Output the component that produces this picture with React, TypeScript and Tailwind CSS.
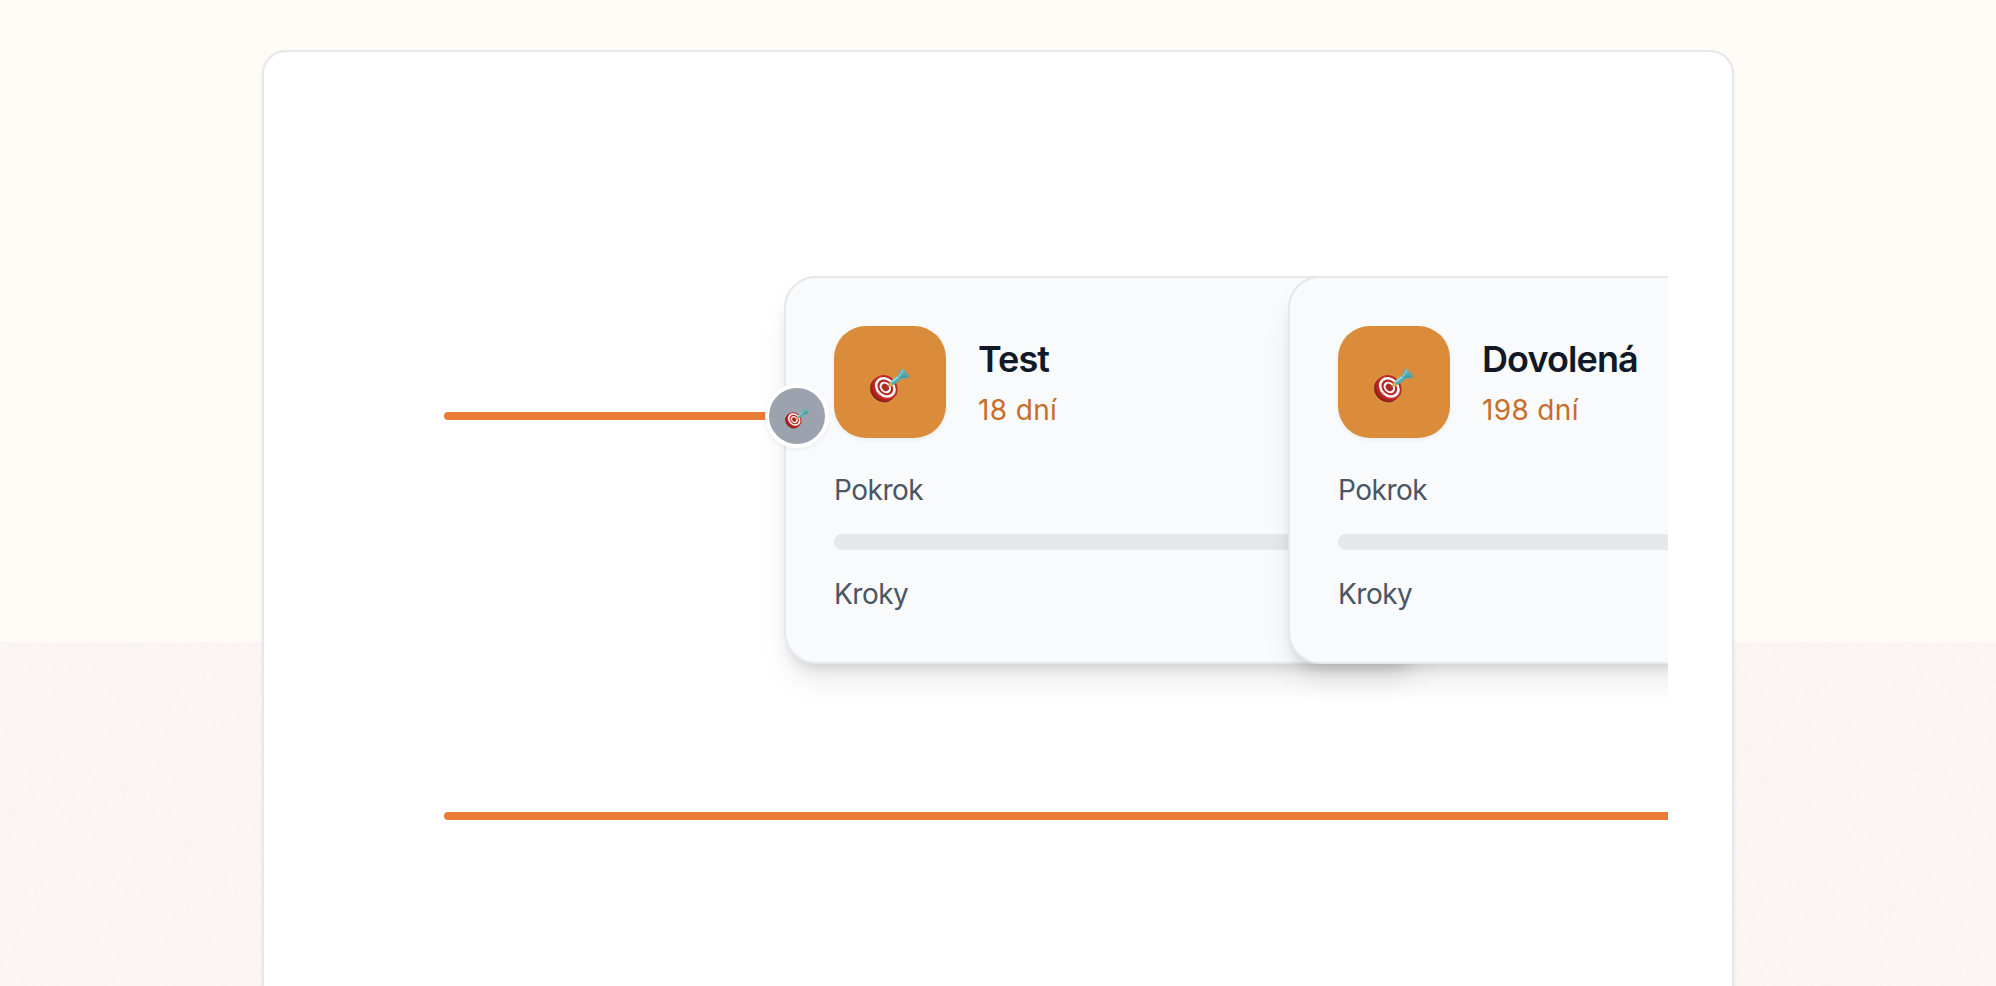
type Goal = { title: string; days: string; offset: string };

const goals: Goal[] = [
  { title: "Test", days: "18 dní", offset: "ml-[456px]" },
  { title: "Dovolená", days: "198 dní", offset: "-ml-[136px]" },
];

function TargetIcon({ className }: { className: string }) {
  return (
    <svg viewBox="0 0 120 103" className={`overflow-visible ${className}`} aria-hidden="true">
      <ellipse cx="38" cy="65" rx="40" ry="35" transform="rotate(45 38 65)" fill="#7f1f1b" />
      <ellipse cx="41" cy="62" rx="40" ry="35" transform="rotate(45 41 62)" fill="#a82320" />
      <g transform="rotate(45 46 58)">
        <ellipse cx="46" cy="58" rx="40" ry="34" fill="#bf2c27" />
        <ellipse cx="46" cy="58" rx="34" ry="28" fill="#fafafa" />
        <ellipse cx="46" cy="58" rx="26" ry="21" fill="#b92521" />
        <ellipse cx="46" cy="58" rx="19" ry="15.500" fill="#fafafa" />
        <ellipse cx="46" cy="58" rx="12" ry="9.500" fill="#b12420" />
      </g>
      <path d="M48 58L63 48" stroke="#8a5a20" strokeWidth="3" />
      <path d="M56 48l7-8 8 11-9 4z" fill="#e3b52c" />
      <path d="M62 42Q64 35 86 22L94 33Q76 48 70 51Q63 50 62 42z" fill="#4fa9b3" />
      <path d="M63 41Q66 34 86 22L90 27Q74 38 65 45z" fill="#8adbe0" />
      <path d="M84 25L88 10L100 0Q104 4 105 12L97 26L91 31z" fill="#5fb3bc" />
      <path d="M88 28L102 15L109 10Q109 16 112 18Q115 21 120 24L108 31L92 33z" fill="#55a6b0" />
      <path d="M89 29L114 24" stroke="#388792" strokeWidth="2" />
      <path d="M88 24L99 5" stroke="#8fdbe0" strokeWidth="2.500" />
    </svg>
  );
}

function GoalCard({ goal }: { goal: Goal }) {
  return (
    <article
      className={`${goal.offset} h-[388px] w-[640px] shrink-0 rounded-[32px] border-2 border-[#e5e7eb] bg-[#f9fafb] p-12 shadow-[0_20px_30px_-6px_rgba(0,0,0,0.1),0_8px_12px_-4px_rgba(0,0,0,0.1)]`}
    >
      <header className="mb-8 flex items-center gap-8">
        <div className="flex size-28 items-center justify-center rounded-[32px] bg-[#da8c3a] pt-1.5 shadow-[0_2px_4px_rgba(0,0,0,0.05)]">
          <TargetIcon className="h-[34.500px] w-10" />
        </div>
        <div>
          <h3 className="mb-1.5 text-[36px] leading-[50px] font-semibold tracking-[-0.025em] text-[#111827]">
            {goal.title}
          </h3>
          <p className="text-[28px] leading-10 tracking-[0.35px] text-[#c66e2a]">{goal.days}</p>
        </div>
      </header>
      <p className="text-[28px] leading-10 tracking-[-0.5px] text-[#4b5563]">Pokrok</p>
      <div className="my-6 h-4 rounded-full bg-[#e5e7eb]" />
      <p className="text-[28px] leading-10 tracking-[-0.5px] text-[#4b5563]">Kroky</p>
    </article>
  );
}

export default function App() {
  return (
    <main className="grid h-[986px] grid-cols-1 overflow-hidden bg-[#fffbf6] font-['Inter','Liberation_Sans',sans-serif]">
      <svg className="col-start-1 row-start-1 mt-[642px] h-[344px] w-full bg-[#fcf7f4]" aria-hidden="true">
        <filter id="grain" x="0" y="0" width="100%" height="100%">
          <feTurbulence type="fractalNoise" baseFrequency="0.3" numOctaves="3" stitchTiles="stitch" />
          <feColorMatrix type="saturate" values="0.4" />
        </filter>
        <rect width="100%" height="100%" filter="url(#grain)" opacity="0.06" />
      </svg>
      <section className="col-start-1 row-start-1 mx-auto mt-[50px] h-[1100px] w-[1472px] rounded-3xl border-2 border-[#e5e7eb] bg-white p-16 shadow-[0_2px_4px_rgba(0,0,0,0.05)]">
        <div className="h-full overflow-hidden pt-40">
          <div className="grid grid-cols-1">
            <div className="col-start-1 row-start-1 mt-[136px] ml-[116px] h-2 w-[352px] rounded-full bg-[#e87b35]" />
            <div className="col-start-1 row-start-1 flex min-w-0">
              {goals.map((goal) => (
                <GoalCard key={goal.title} goal={goal} />
              ))}
            </div>
            <div className="z-10 col-start-1 row-start-1 mt-[108px] ml-[437px] flex size-16 items-center justify-center rounded-full border-4 border-white bg-[#9ca3af] pt-1 shadow-[0_2px_4px_rgba(0,0,0,0.06)]">
              <TargetIcon className="h-[20.500px] w-6" />
            </div>
          </div>
          <div className="mt-[148px] ml-[116px] h-2 w-[1500px] rounded-full bg-[#e87b35]" />
        </div>
      </section>
    </main>
  );
}
